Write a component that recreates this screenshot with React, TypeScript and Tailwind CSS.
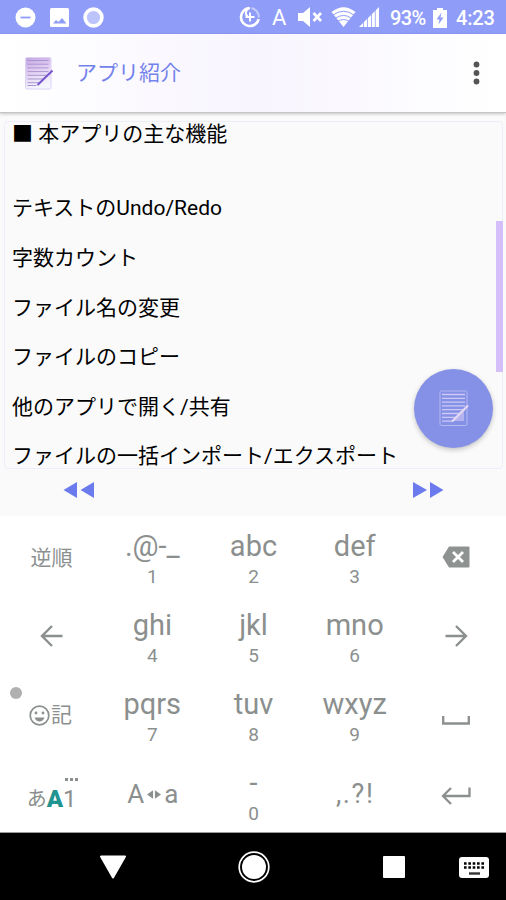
import { ReactNode } from 'react';

const LINES = [
  '■ 本アプリの主な機能',
  '',
  '',
  'テキストのUndo/Redo',
  '',
  '字数カウント',
  '',
  'ファイル名の変更',
  '',
  'ファイルのコピー',
  '',
  '他のアプリで開く/共有',
  '',
  'ファイルの一括インポート/エクスポート',
];

function StatusBar() {
  return (
    <div className="h-[34px] shrink-0 bg-[#8f9df9] flex items-center text-white">
      <svg className="ml-[15px]" width="21" height="21" viewBox="0 0 21 21">
        <circle cx="10.5" cy="10.5" r="10" fill="#fff" />
        <path d="M5.5 10.5h10" stroke="#8f9df9" strokeWidth="1.8" />
      </svg>
      <svg className="ml-[14px]" width="19" height="19" viewBox="0 0 19 19">
        <rect width="19" height="19" rx="1.5" fill="#fff" />
        <path d="M3 15.5l3-3.5 2.5 2 3.5-4 4.500 5.500z" fill="#8f9df9" />
      </svg>
      <svg className="ml-[14px]" width="21" height="21" viewBox="0 0 21 21">
        <circle cx="10.500" cy="10.5" r="8.4" fill="#bcc4fb" stroke="#fff" strokeWidth="3.6" />
      </svg>
      <svg className="ml-[135px]" width="22" height="22" viewBox="0 0 22 22" fill="none" stroke="#fff">
        <path d="M10 2.1a9 9 0 1 0 9.700 11" strokeWidth="2.6" />
        <path d="M12.500 2.200a9 9 0 0 1 7.300 9.300" strokeWidth="2.2" opacity=".45" />
        <path d="M11 2a5 5 0 0 0-2 9M11 6.500v9M6.500 11h9" strokeWidth="1.9" />
      </svg>
      <span className="ml-[11px] mt-[2px] w-[16px] text-[22px] leading-none font-[Roboto]">A</span>
      <svg className="ml-[10px]" width="25" height="20" viewBox="0 0 25 20">
        <path d="M0 6h5l7-6v20l-7-6H0z" fill="#fff" />
        <path d="M15.500 6l7.500 8M23 6l-7.500 8" stroke="#fff" strokeWidth="2.6" />
      </svg>
      <svg className="ml-[8px]" width="25" height="20" viewBox="0 0 25 20">
        <path d="M0.500 5Q12.500-4.500 24.500 5L12.500 20z" fill="#fff" />
        <path d="M2 8q10.500-7.500 21 0M4.500 11.200q8-5.500 16 0M7 14.300q5.500-3.500 11 0" fill="none" stroke="#8f9df9" strokeWidth="1" />
      </svg>
      <svg className="ml-[3px]" width="20" height="20" viewBox="0 0 20 20">
        <path d="M20 0v20H0z" fill="#fff" />
        <path d="M4.500 10v10M8.500 6v14M12.500 2v18M16.300 0v20" stroke="#8f9df9" strokeWidth=".8" />
      </svg>
      <span className="ml-[11px] mt-[1px] w-[38px] text-[20px] leading-none font-medium font-[Roboto] tracking-[-0.6px] whitespace-nowrap">93%</span>
      <svg className="ml-[5px] mt-[2px]" width="14" height="20" viewBox="0 0 14 20">
        <path d="M4 0h6v2h4v18H0V2h4z" fill="#fff" />
        <path d="M8.500 4.500L3.500 11.500h3L5.500 16.500l5-7h-3z" fill="#8f9df9" />
      </svg>
      <span className="ml-[9px] mt-[2px] text-[20px] leading-none font-medium font-[Roboto] tracking-[-0.2px]">4:23</span>
    </div>
  );
}

function Header() {
  return (
    <header className="relative z-10 h-[79px] shrink-0 flex items-center bg-linear-to-r from-white via-[#f8f5fe] to-white border-b border-[#c4c6c4] shadow-[0_1px_3px_rgba(0,0,0,0.22)]">
      <svg className="ml-[25px]" width="29" height="33" viewBox="0 0 29 33">
        <defs>
          <linearGradient id="memo" x1="0" y1="0" x2="0.300" y2="1">
            <stop offset="0" stopColor="#c3a3e4" />
            <stop offset=".5" stopColor="#e3cff3" />
            <stop offset="1" stopColor="#f4f6ff" />
          </linearGradient>
        </defs>
        <rect x=".5" y=".5" width="25.500" height="31.500" rx="1.500" fill="url(#memo)" stroke="#dcd3f4" />
        <path d="M2.500 3.500h21M2.500 7.200h21M2.500 10.900h21M2.500 14.600h21M2.500 18.300h19M2.500 22h16M2.500 25.700h12M2.500 28.500h9" stroke="#ab97cf" strokeWidth="1" />
        <path d="M12.500 28L27.500 13.500" stroke="#7654cc" strokeWidth="2" />
      </svg>
      <h1 className="ml-[22px] -mt-[4px] text-[21px] leading-none text-[#7482ec] font-['Noto_Sans_CJK_JP',sans-serif]">アプリ紹介</h1>
      <svg className="ml-auto mr-[26px]" width="7" height="24" viewBox="0 0 7 24" fill="#555">
        <circle cx="3.500" cy="3.500" r="2.900" />
        <circle cx="3.500" cy="12" r="2.900" />
        <circle cx="3.500" cy="20.500" r="2.900" />
      </svg>
    </header>
  );
}

function Fab() {
  return (
    <button className="absolute left-[409px] top-[247px] size-[79px] rounded-full bg-[#8591e6] shadow-[0_2px_5px_rgba(0,0,0,0.22)] flex items-center justify-center">
      <svg width="30" height="37" viewBox="0 0 30 37" fill="none">
        <rect x="1" y="1" width="27" height="34.500" rx="1.500" stroke="#b3b9f1" />
        <path d="M3 4.500h23M3 8.300h23M3 12.100h23M3 15.900h23M3 19.700h23M3 23.500h19M3 27.300h14M3 31.100h11" stroke="#cdc9f4" strokeWidth="1.300" />
        <path d="M13.500 31L25 20v11z" fill="#b4b3ef" />
        <path d="M13 31.500L29 15.500" stroke="#e6d9f6" strokeWidth="2.2" />
      </svg>
    </button>
  );
}

function Editor() {
  return (
    <main className="h-[403px] shrink-0 bg-[#fafafa] pt-[8px] pl-[4px] pr-[3px]">
      <div className="relative h-[348px] border border-[#eeeefb] rounded pl-[7px]">
        <div className="h-[346px] overflow-hidden text-[21px] text-black font-[Roboto,'Noto_Sans_CJK_JP',sans-serif]">
          {LINES.map((line, i) => (
            <p key={i} className="h-[24.8px] leading-[24.8px] whitespace-nowrap">{line}</p>
          ))}
        </div>
        <div className="absolute right-[-1px] top-[99px] w-[7px] h-[151px] bg-[#d5bffb]" />
        <Fab />
      </div>
      <div className="h-[42px] flex justify-between pl-[59px] pr-[58px] pt-[13px]">
        <svg width="32" height="16" viewBox="0 0 32 16" fill="#6b7bee">
          <path d="M14 0v16L0.500 8zM31 0v16L17.500 8z" />
        </svg>
        <svg width="32" height="16" viewBox="0 0 32 16" fill="#6b7bee">
          <path d="M0 0v16L14 8zM17 0v16L30.500 8z" />
        </svg>
      </div>
    </main>
  );
}

function CharKey({ label, digit }: { label: string; digit?: string }) {
  return (
    <div className="flex flex-col items-center pt-[16px] pl-[1px]">
      <span className="text-[29px] leading-[29px]">{label}</span>
      {digit && <span className="mt-[6px] text-[19px] leading-[19px]">{digit}</span>}
    </div>
  );
}

function IconKey({ children }: { children: ReactNode }) {
  return <div className="relative flex items-center justify-center pt-[3px] pl-[2px]">{children}</div>;
}

function Keyboard() {
  return (
    <div className="h-[317px] shrink-0 bg-white grid grid-cols-5 grid-rows-4 text-[#8b8f8e] font-[Roboto,'Noto_Sans_CJK_JP',sans-serif] border-b border-[#9a9a9a]">
      <IconKey><span className="mt-[2px] text-[21px] leading-none">逆順</span></IconKey>
      <CharKey label=".@-_" digit="1" />
      <CharKey label="abc" digit="2" />
      <CharKey label="def" digit="3" />
      <IconKey>
        <svg width="28" height="22" viewBox="0 0 28 22">
          <path d="M7 0.500h19.500q1 0 1 1v19q0 1-1 1H7L0.500 11z" fill="#8e9392" />
          <path d="M11 6l10 10M21 6L11 16" stroke="#fff" strokeWidth="2.800" />
        </svg>
      </IconKey>

      <IconKey>
        <svg width="23" height="22" viewBox="0 0 23 22" fill="none" stroke="#8b8f8e" strokeWidth="2.4">
          <path d="M22.500 11H2M12 1L2 11l10 10" />
        </svg>
      </IconKey>
      <CharKey label="ghi" digit="4" />
      <CharKey label="jkl" digit="5" />
      <CharKey label="mno" digit="6" />
      <IconKey>
        <svg width="23" height="22" viewBox="0 0 23 22" fill="none" stroke="#8b8f8e" strokeWidth="2.4">
          <path d="M0.500 11H21M11 1l10 10-10 10" />
        </svg>
      </IconKey>

      <IconKey>
        <span className="absolute left-[10px] top-[13px] size-[12px] rounded-full bg-[#b0b0b0]" />
        <svg className="-ml-[2px]" width="21" height="21" viewBox="0 0 21 21" fill="none" stroke="#8b8f8e">
          <circle cx="10.500" cy="10.500" r="9.300" strokeWidth="1.700" />
          <path d="M5.500 12.500h10q-1.500 4-5 4t-5-4z" fill="#8b8f8e" stroke="none" />
          <circle cx="7" cy="8" r="1.400" fill="#8b8f8e" stroke="none" />
          <circle cx="14" cy="8" r="1.400" fill="#8b8f8e" stroke="none" />
        </svg>
        <span className="ml-[1px] text-[21px] leading-none">記</span>
      </IconKey>
      <CharKey label="pqrs" digit="7" />
      <CharKey label="tuv" digit="8" />
      <CharKey label="wxyz" digit="9" />
      <IconKey>
        <svg className="mt-[10px]" width="28" height="9" viewBox="0 0 28 9" fill="none" stroke="#8b8f8e" strokeWidth="2.3">
          <path d="M1.200 0v7.500h25.600V0" />
        </svg>
      </IconKey>

      <IconKey>
        <span className="mt-[9px] text-[20px] leading-none">あ</span>
        <span className="mt-[9px] text-[24px] leading-none font-black text-[#1f9490]">A</span>
        <span className="mt-[9px] text-[24px] leading-none">1</span>
        <span className="absolute left-[65px] top-[25px] flex gap-[2px]">
          <i className="size-[3px] bg-[#8b8f8e]" />
          <i className="size-[3px] bg-[#8b8f8e]" />
          <i className="size-[3px] bg-[#8b8f8e]" />
        </span>
      </IconKey>
      <IconKey>
        <span className="text-[26px] leading-none">A</span>
        <svg className="mx-[3px]" width="14" height="9" viewBox="0 0 15 9" fill="#8b8f8e">
          <path d="M6.500 0v9L0 4.500zM8.500 0v9L15 4.500z" />
        </svg>
        <span className="text-[26px] leading-none">a</span>
      </IconKey>
      <CharKey label="-" digit="0" />
      <IconKey><span className="text-[27px] leading-none tracking-[1.600px]">,.?!</span></IconKey>
      <IconKey>
        <svg className="mt-[4px]" width="30" height="18" viewBox="0 0 30 18" fill="none" stroke="#8b8f8e" strokeWidth="2.3">
          <path d="M28.500 0.500V9H2M10 1L2 9l8 8" />
        </svg>
      </IconKey>
    </div>
  );
}

function NavBar() {
  return (
    <nav className="h-[67px] shrink-0 bg-black flex items-center">
      <svg className="ml-[99px]" width="28" height="24" viewBox="0 0 28 24">
        <path d="M2 1.500h24L14 22.500z" fill="#fff" stroke="#fff" strokeWidth="2" strokeLinejoin="round" />
      </svg>
      <svg className="ml-[111px]" width="32" height="32" viewBox="0 0 32 32">
        <circle cx="16" cy="16" r="14.800" fill="none" stroke="#fff" strokeWidth="1.700" />
        <circle cx="16" cy="16" r="12" fill="#fff" />
      </svg>
      <div className="ml-[113px] size-[22px] rounded-[1px] bg-white" />
      <svg className="ml-[54px] mt-[1px]" width="30" height="21" viewBox="0 0 30 21">
        <rect width="30" height="21" rx="3" fill="#fff" />
        <path d="M5 6.500h20M5 10.500h20" stroke="#000" strokeWidth="2.600" strokeDasharray="2.600 1.750" />
        <path d="M10 16.500h11" stroke="#333" strokeWidth="2.400" />
      </svg>
    </nav>
  );
}

export default function App() {
  return (
    <div className="w-[506px] h-[900px] flex flex-col overflow-hidden bg-white">
      <StatusBar />
      <Header />
      <Editor />
      <Keyboard />
      <NavBar />
    </div>
  );
}
